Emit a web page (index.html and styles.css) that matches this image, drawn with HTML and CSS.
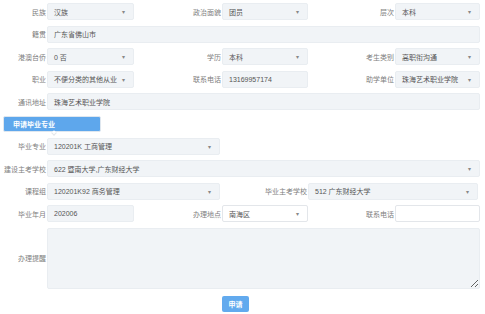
FILE: index.html
```html
<!DOCTYPE html>
<html lang="zh-CN">

<head>
    <meta charset="UTF-8">
    <meta name="viewport" content="width=device-width, initial-scale=1.0">
    <title>申请毕业专业</title>
    <link rel="stylesheet" href="styles.css">
</head>

<body>

    <form class="apply-form" method="get">
        <label class="label">民族</label>
        <div class="field select"><span>汉族</span><i class="caret">▾</i></div>
        <label class="label">政治面貌</label>
        <div class="field select"><span>团员</span><i class="caret">▾</i></div>
        <label class="label">层次</label>
        <div class="field select"><span>本科</span><i class="caret">▾</i></div>

        <label class="label">籍贯</label>
        <div class="field span-all">广东省佛山市</div>

        <label class="label">港澳台侨</label>
        <div class="field select"><span>0 否</span><i class="caret">▾</i></div>
        <label class="label">学历</label>
        <div class="field select"><span>本科</span><i class="caret">▾</i></div>
        <label class="label">考生类别</label>
        <div class="field select"><span>高职衔沟通</span><i class="caret">▾</i></div>

        <label class="label">职业</label>
        <div class="field select"><span>不便分类的其他从业</span><i class="caret">▾</i></div>
        <label class="label">联系电话</label>
        <div class="field">13169957174</div>
        <label class="label">助学单位</label>
        <div class="field select"><span>珠海艺术职业学院</span><i class="caret">▾</i></div>

        <label class="label">通讯地址</label>
        <div class="field span-all">珠海艺术职业学院</div>

        <div class="tab-row">
            <button type="button" class="tab-btn">申请毕业专业</button>
        </div>

        <label class="label">毕业专业</label>
        <div class="field select span-two"><span>120201K 工商管理</span><i class="caret">▾</i></div>
        <div class="blank"></div>

        <label class="label">建设主考学校</label>
        <div class="field select span-all"><span>622 暨南大学,广东财经大学</span><i class="caret">▾</i></div>

        <label class="label">课程组</label>
        <div class="field select span-two"><span>120201K92 商务管理</span><i class="caret">▾</i></div>
        <label class="label">毕业主考学校</label>
        <div class="field select span-two"><span>512 广东财经大学</span><i class="caret">▾</i></div>

        <label class="label">毕业年月</label>
        <div class="field">202006</div>
        <label class="label">办理地点</label>
        <div class="field select white"><span>南海区</span><i class="caret">▾</i></div>
        <label class="label">联系电话</label>
        <input class="field white" type="text">

        <label class="label">办理提醒</label>
        <textarea class="field memo span-all"></textarea>

        <div class="submit-row">
            <button type="button" class="submit-btn">申请</button>
        </div>
    </form>

</body>

</html>
```

FILE: styles.css
```css
body {
    margin: 0;
    font-family: "Liberation Sans", "Noto Sans CJK SC", sans-serif;
    font-size: 7px;
    color: #666;
    background: #fff;
}

.apply-form {
    display: grid;
    grid-template-columns: 47px 87px 88px 86px 87px 85px;
    row-gap: 5.5px;
    padding-top: 3px;
}

.label {
    align-self: center;
    text-align: right;
    padding-right: 1px;
    color: #808080;
    white-space: nowrap;
}

.field {
    box-sizing: border-box;
    height: 17px;
    margin: 0;
    padding: 0 6px;
    display: flex;
    align-items: center;
    background: #f1f4f7;
    border: 1px solid #e9edf1;
    border-radius: 2px;
    color: #555;
    font: inherit;
    white-space: nowrap;
    overflow: hidden;
}

.select {
    justify-content: space-between;
    padding-right: 8px;
}

.caret {
    font-style: normal;
    font-size: 6px;
    color: #888;
}

.white {
    background: #fff;
    border-color: #e3e6ea;
    outline: none;
}

.span-all {
    grid-column: 2 / -1;
}

.span-two {
    grid-column: span 2;
    margin-right: 2px;
}

.blank {
    grid-column: span 3;
}

.tab-row {
    grid-column: 1 / -1;
    padding-top: 0.5px;
}

.tab-btn {
    position: relative;
    display: flex;
    align-items: center;
    box-sizing: border-box;
    width: 98px;
    height: 16px;
    margin-left: 3px;
    padding: 0 0 0 9px;
    background: #5ea7ec;
    border: 1px solid #dfe7ef;
    border-radius: 2px;
    color: #fff;
    font: inherit;
    font-weight: bold;
}

.tab-btn::after {
    content: '';
    position: absolute;
    left: 48px;
    top: 14px;
    width: 3px;
    height: 3px;
    background: #fff;
    border-right: 1px solid #e3e6ea;
    border-bottom: 1px solid #e3e6ea;
    transform: rotate(45deg);
}

.memo {
    display: block;
    height: 61px;
    resize: vertical;
}

.submit-row {
    grid-column: 4 / 5;
    padding-top: 1.5px;
}

.submit-btn {
    display: block;
    box-sizing: border-box;
    width: 27px;
    height: 16px;
    padding: 0;
    background: #62aaee;
    border: none;
    border-radius: 2px;
    color: #fff;
    font: inherit;
    font-weight: bold;
}
```
